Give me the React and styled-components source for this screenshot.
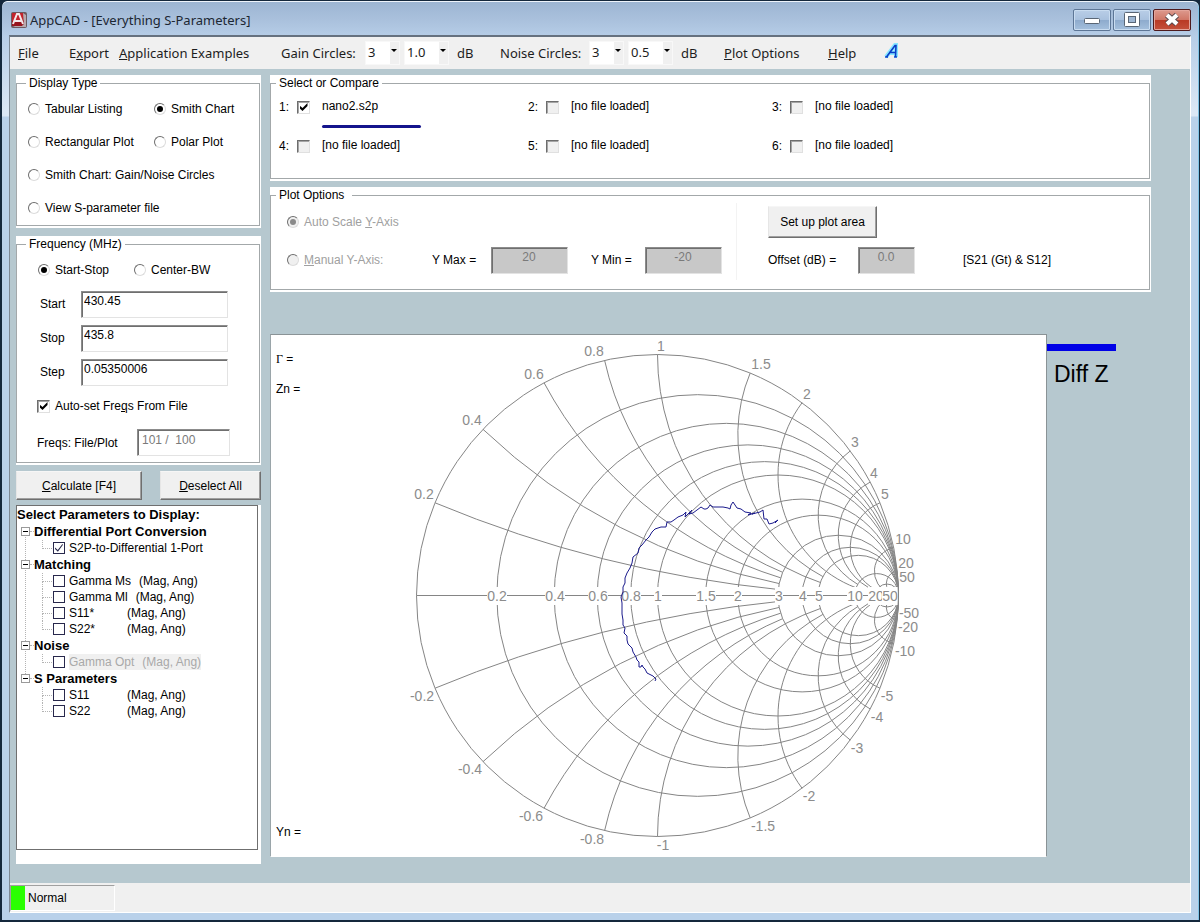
import React from "react";
import styled, { createGlobalStyle, css } from "styled-components";

const GlobalStyle = createGlobalStyle`
  *, *::before, *::after { box-sizing: border-box; }
  body {
    margin: 0;
    background: #14283c;
    font-family: "Liberation Sans", Arial, sans-serif;
    font-size: 12px;
    line-height: 16px;
    color: #000;
  }
  button, input, select { font: inherit; color: inherit; margin: 0; }
  ul { list-style: none; margin: 0; padding: 0; }
`;

/* ---------- window frame ---------- */

const Window = styled.div`
  display: flex;
  flex-direction: column;
  min-height: 100vh;
  border: solid #14283c;
  border-width: 1px 1px 2px 2px;
  border-radius: 7px 7px 0 0;
  padding: 0 8px 7px 7px;
  box-shadow: inset 0 1px 0 #eef4fb, inset -1px 0 0 #7fc3e6;
  background:
    linear-gradient(#9cb5d2, #a9c0dc 18px, #b6cde7 35px, #dbe7f5 110px, #dbe7f5 115px, #b9d1ea 116px);
`;

const TitleBar = styled.header`
  display: flex;
  align-items: center;
  height: 34px;
  padding: 4px 0 0 2px;
  gap: 3px;
`;

const Title = styled.h1`
  flex: 1;
  margin: 0;
  font: 13px/18px "Noto Sans", "Open Sans", sans-serif;
  color: #1c2733;
`;

const CaptionButtons = styled.div`
  display: flex;
  gap: 2px;
`;

const CaptionButton = styled.button`
  display: flex;
  align-items: center;
  justify-content: center;
  width: 38px;
  height: 22px;
  padding: 0;
  border: 1px solid ${(p) => (p.$close ? "#4d1a1d" : "#5d7696")};
  border-radius: 2px;
  box-shadow: inset 0 0 0 1px ${(p) => (p.$close ? "#e4a59b" : "#c9dcf0")};
  background: ${(p) =>
    p.$close
      ? "linear-gradient(#dd9a8e, #d07767 48%, #b93a25 52%, #c4513c)"
      : "linear-gradient(#b9cee7, #a9c1de 48%, #8eabcd 52%, #a5c0dd)"};
`;

const Client = styled.div`
  flex: 1;
  display: flex;
  flex-direction: column;
  border: solid;
  border-width: 2px 1px 1px 1px;
  border-color: #66717f #fff #fff #7d8894;
  background: #b6c8cf;
`;

/* ---------- menu bar ---------- */

const MenuBar = styled.nav`
  display: flex;
  align-items: center;
  height: 32px;
  padding: 0 8px;
  background: #f0f0f0;
  font: 13px/18px "Noto Sans", "Open Sans", sans-serif;
  color: #1d1d1d;
`;

const MenuSlot = styled.div`
  flex: 0 0 ${(p) => p.$w}px;
  white-space: nowrap;
`;

const MenuButton = styled.button`
  padding: 0;
  border: 0;
  background: none;
`;

const SelectBox = styled.div`
  position: relative;
  width: ${(p) => p.$w}px;
  height: 24px;
  border: 1px solid #f8f8f8;
  background: linear-gradient(to left, #f0f0f0 9px, #fff 9px);
  &::after {
    content: "";
    position: absolute;
    right: 2px;
    top: 7px;
    border: 3px solid transparent;
    border-top-color: #000;
    border-bottom: 0;
    pointer-events: none;
  }
`;

const Select = styled.select`
  appearance: none;
  display: block;
  width: 100%;
  height: 20px;
  padding: 0 0 0 2px;
  border: 0;
  background: none;
  line-height: 20px;
`;

/* ---------- layout ---------- */

const Workspace = styled.main`
  flex: 1;
  display: flex;
  gap: 9px;
  padding: 6px 0 19px 6px;
`;

const Sidebar = styled.aside`
  flex: 0 0 245px;
  display: flex;
  flex-direction: column;
  gap: 8px;
`;

const Content = styled.section`
  flex: 1;
  min-width: 0;
  display: flex;
  flex-direction: column;
  gap: 6px;
  padding-bottom: 7px;
`;

const GroupBox = styled.div`
  padding: 0 1px 2px 0;
  margin-right: ${(p) => p.$inset || 0}px;
  background: #fff;
`;

const Fieldset = styled.fieldset`
  min-width: 0;
  margin: 0;
  padding: 0;
  border: 1px solid #a3a8aa;
`;

const Legend = styled.legend`
  height: 16px;
  margin-left: ${(p) => p.$x}px;
  padding: 0 ${(p) => p.$end || 3}px 0 3px;
`;

/* ---------- form controls ---------- */

const ChoiceLabel = styled.label`
  display: flex;
  align-items: center;
  gap: 5px;
  white-space: nowrap;
  ${(p) => p.$off && css`color: #a0a0a0;`}
`;

const Radio = styled.input.attrs({ type: "radio" })`
  appearance: none;
  display: grid;
  place-items: center;
  flex: none;
  width: 12px;
  height: 12px;
  border: 1px solid;
  border-color: #6d6d6d #dcdcdc #dcdcdc #6d6d6d;
  border-radius: 50%;
  background: #fff;
  &:checked::before {
    content: "";
    width: 6px;
    height: 6px;
    border-radius: 50%;
    background: #000;
  }
  &:disabled { background: #f0f0f0; }
  &:disabled::before { background: #8a8a8a; }
`;

const Check = styled.input.attrs({ type: "checkbox" })`
  appearance: none;
  display: grid;
  place-items: center;
  flex: none;
  width: 13px;
  height: 13px;
  border: 1px solid;
  border-color: #6d6d6d #e0e0e0 #e0e0e0 #6d6d6d;
  box-shadow: inset 1px 1px 0 #a5a5a5;
  background: ${(p) => (p.$gray ? "#f0f0f0" : "#fff")};
  &:checked::before {
    content: "";
    width: 8px;
    height: 8px;
    background: #000;
    clip-path: polygon(0 30%, 38% 62%, 100% 0, 100% 36%, 38% 100%, 0 66%);
  }
`;

const TextField = styled.input.attrs({ type: "text" })`
  width: ${(p) => p.$w}px;
  height: 27px;
  padding: 1px 3px 7px ${(p) => p.$pad || 2}px;
  border: 1px solid;
  border-color: #8c8c8c #e3e3e3 #e3e3e3 #8c8c8c;
  border-radius: 0;
  box-shadow: inset 1px 1px 0 #6f6f6f;
  background: ${(p) => (p.$filled ? "#c8c8c8" : "#fff")};
  text-align: ${(p) => (p.$filled ? "center" : "left")};
  ${(p) => p.$dim && css`color: #7a7a7a;`}
`;

const PushButton = styled.button`
  height: ${(p) => p.$h || 29}px;
  width: ${(p) => p.$w}px;
  padding: 0;
  border: 1px solid;
  border-color: #f6f6f6 #6f6f6f #6f6f6f #e6e6e6;
  border-radius: 0;
  box-shadow: inset -1px -1px 0 #a0a0a0;
  background: #f0f0f0;
`;

const RadioGrid = styled.div`
  display: grid;
  grid-template-columns: 126px 1fr;
  grid-auto-rows: 33px;
  padding: 1px 0 1px 11px;
`;

const FullRow = styled.div`
  display: flex;
  grid-column: 1 / -1;
`;

const FieldRow = styled.div`
  display: flex;
  align-items: center;
  height: ${(p) => p.$h || 34}px;
  padding-left: ${(p) => p.$x}px;
`;

const FieldLabel = styled.label`
  flex: 0 0 ${(p) => p.$w}px;
  white-space: nowrap;
`;

const ButtonRow = styled.div`
  display: flex;
  justify-content: space-between;
  margin: -2px 0;
`;

/* ---------- file slots ---------- */

const FileGrid = styled.div`
  display: grid;
  grid-template-columns: 249px 244px 1fr;
  grid-auto-rows: 39px;
  height: 87px;
  padding-left: 8px;
`;

const FileCell = styled.label`
  display: grid;
  grid-template-columns: 18px 13px 1fr;
  grid-template-rows: 32px 3px;
  row-gap: 2px;
  align-items: center;
`;

const FileName = styled.span`
  padding: 0 0 3px 12px;
`;

const TraceMark = styled.span`
  grid-column: 3;
  width: 99px;
  height: 3px;
  margin-left: 12px;
  border-radius: 2px;
  background: #14148c;
`;

/* ---------- plot options ---------- */

const PlotGrid = styled.div`
  display: flex;
  height: 86px;
  padding-bottom: 9px;
`;

const PlotColumn = styled.div`
  flex: 0 0 ${(p) => p.$w || "auto"};
  display: grid;
  grid-auto-rows: 38px;
  padding-left: ${(p) => p.$x}px;
  ${(p) => p.$rule && css`border-right: 1px solid #f3f3f3;`}
`;

const PlotRow = styled.div`
  display: flex;
  align-items: center;
  white-space: nowrap;
`;

const ChoiceSlot = styled.div`
  flex: 0 0 ${(p) => p.$w}px;
`;

const PlotNote = styled.span`
  margin-left: 48px;
`;

/* ---------- chart ---------- */

const ChartRow = styled.div`
  flex: 1;
  display: flex;
  margin-top: 36px;
`;

const ChartPanel = styled.figure`
  flex: 1;
  min-width: 0;
  display: flex;
  margin: 0;
  border: 1px solid;
  border-color: #8a9396 #8a9396 #fff #9aa5a9;
  background: #fff;
`;

const ChartSvg = styled.svg`
  flex: 1;
  display: block;
  width: 100%;
  height: 521px;
`;

const ChartLegend = styled.div`
  flex: 0 0 143px;
  padding-top: 10px;
`;

const LegendBar = styled.div`
  width: 69px;
  height: 7px;
  background: #0000e6;
`;

const LegendText = styled.p`
  margin: 9px 0 0 7px;
  font-size: 23px;
  line-height: 28px;
`;

/* ---------- parameter tree ---------- */

const TreePane = styled.div`
  flex: 1;
  display: flex;
  padding: 0 3px 14px 0;
  margin-top: -1px;
  background: #fff;
`;

const TreeBox = styled.div`
  flex: 1;
  border: 1px solid #6f6f6f;
`;

const TreeTitle = styled.h2`
  height: 17px;
  margin: 0;
  font-size: 13px;
  line-height: 17px;
`;

const TreeGroup = styled.li`
  position: relative;
  &:not(:last-child)::before {
    content: "";
    position: absolute;
    left: 8px;
    top: 8px;
    bottom: -8px;
    border-left: 1px dotted #b4b4b4;
  }
`;

const TreeHead = styled.div`
  display: flex;
  align-items: center;
  height: 17px;
  padding-left: 4px;
  font-size: 13px;
  font-weight: bold;
`;

const Toggle = styled.button`
  position: relative;
  width: 9px;
  height: 9px;
  padding: 0;
  border: 1px solid #9a9a9a;
  background: #fff;
  &::before {
    content: "";
    position: absolute;
    left: 1px;
    top: 3px;
    width: 5px;
    height: 1px;
    background: #000;
  }
`;

const Dash = styled.span`
  width: 4px;
  border-top: 1px dotted #b4b4b4;
`;

const TreeLeaf = styled.li`
  position: relative;
  height: 16px;
  padding-left: 36px;
  &::before {
    content: "";
    position: absolute;
    left: 25px;
    top: 0;
    width: 10px;
    height: 9px;
    border: dotted #b4b4b4;
    border-width: 0 0 1px 1px;
  }
  &:not(:last-child)::after {
    content: "";
    position: absolute;
    left: 25px;
    top: 8px;
    height: 8px;
    border-left: 1px dotted #b4b4b4;
  }
`;

const LeafLabel = styled.label`
  display: flex;
  align-items: center;
  white-space: nowrap;
  ${(p) => p.$off && css`color: #a9a9a9;`}
`;

const LeafCheck = styled.input.attrs({ type: "checkbox" })`
  appearance: none;
  display: grid;
  place-items: center;
  width: 12px;
  height: 12px;
  margin-right: 4px;
  border: 1px solid #28284c;
  background: #fff;
  &:checked::before {
    content: "";
    width: 8px;
    height: 8px;
    background: #28284c;
    clip-path: polygon(0 45%, 35% 76%, 92% 0, 100% 10%, 36% 98%, 0 64%);
  }
`;

const LeafText = styled.span`
  display: flex;
  ${(p) => p.$off && css`background: #f0f0f0;`}
`;

const LeafName = styled.span`
  ${(p) => p.$tagged && css`min-width: 58px; padding-right: 8px;`}
`;

/* ---------- status bar ---------- */

const StatusBar = styled.footer`
  display: flex;
  height: 29px;
  padding: 2px 0 1px;
  background: #f0f0f0;
`;

const StatusCell = styled.div`
  display: flex;
  align-items: center;
  width: 105px;
  border: 1px solid;
  border-color: #a0a0a0 #fff #fff #a0a0a0;
`;

const StatusLamp = styled.span`
  align-self: stretch;
  width: 14px;
  margin-right: 3px;
  background: #2bff00;
`;

/* ---------- data ---------- */

const files = [
  { name: "nano2.s2p", on: true },
  { name: "[no file loaded]" },
  { name: "[no file loaded]" },
  { name: "[no file loaded]" },
  { name: "[no file loaded]" },
  { name: "[no file loaded]" },
];

const tree = [
  {
    title: "Differential Port Conversion",
    items: [{ name: "S2P-to-Differential 1-Port", on: true }],
  },
  {
    title: "Matching",
    items: [
      { name: "Gamma Ms", tag: true },
      { name: "Gamma Ml", tag: true },
      { name: "S11*", tag: true },
      { name: "S22*", tag: true },
    ],
  },
  { title: "Noise", items: [{ name: "Gamma Opt", tag: true, off: true }] },
  {
    title: "S Parameters",
    items: [
      { name: "S11", tag: true },
      { name: "S22", tag: true },
    ],
  },
];

/* ---------- Smith chart ---------- */

const R = 241;
const resistances = [0.2, 0.4, 0.6, 0.8, 1, 1.5, 2, 3, 4, 5, 10, 20, 50];

// Each reactance arc runs from the rim to the resistance circle where it stops.
const reactances = [
  { x: 0.2, stop: 3, up: [-234, -102], down: [-236, 100] },
  { x: 0.4, stop: 3, up: [-186, -176], down: [-188, 173] },
  { x: 0.6, stop: 3, up: [-124, -222], down: [-127, 220] },
  { x: 0.8, stop: 3, up: [-64, -245], down: [-66, 243] },
  { x: 1, stop: 5, up: [3, -250], down: [5, 249] },
  { x: 1.5, stop: 5, up: [103, -232], down: [105, 230] },
  { x: 2, stop: 10, up: [149, -202], down: [151, 200] },
  { x: 3, stop: 10, up: [197, -154], down: [199, 152] },
  { x: 4, stop: 20, up: [216, -123], down: [219, 121] },
  { x: 5, stop: 20, up: [227, -102], down: [229, 100] },
  { x: 10, stop: 50, up: [245, -57], down: [247, 55] },
  { x: 20, stop: 50, up: [248, -33], down: [250, 31] },
  { x: 50, stop: 100, up: [249, -19], down: [251, 17] },
];

const trace = [
  [-3, 85], [-2, 83], [-5, 80], [-11, 77], [-13, 73], [-15, 71], [-16, 69], [-17, 71], [-19, 71], [-19, 66],
  [-21, 64], [-22, 61], [-25, 56], [-26, 52], [-30, 48], [-31, 44], [-31, 40], [-34, 37], [-33, 32],
  [-35, 29], [-35, 24], [-36, 18], [-36, 12], [-36, 7], [-37, 1], [-35, -4], [-35, -9], [-33, -13],
  [-33, -18], [-31, -23], [-28, -28], [-26, -33], [-25, -39], [-20, -43], [-19, -48], [-16, -51],
  [-12, -56], [-9, -59], [-6, -64], [-3, -67], [3, -69], [8, -69], [9, -74], [13, -74], [16, -76],
  [20, -79], [25, -81], [28, -84], [27, -79], [30, -82], [34, -86], [31, -82], [35, -83], [39, -86],
  [43, -89], [46, -87], [48, -87], [50, -88], [52, -91], [55, -89], [65, -89], [70, -88], [72, -87],
  [73, -91], [75, -94], [79, -88], [83, -87], [87, -84], [93, -83], [90, -81], [97, -83], [94, -82], [102, -84],
  [105, -86], [106, -77], [109, -77], [111, -72], [115, -73], [120, -76], [117, -73],
];

const gamma = (r, x) => {
  const d = (r + 1) * (r + 1) + x * x;
  return [(R * (r * r - 1 + x * x)) / d, (R * 2 * x) / d];
};

const arcPath = (x, stop, side) => {
  const [ax, ay] = gamma(0, x);
  const [bx, by] = gamma(stop, x);
  const rad = R / x;
  return `M${ax} ${side * ay}A${rad} ${rad} 0 0 ${side < 0 ? 0 : 1} ${bx} ${side * by}`;
};

const labelWidth = (t) => t.replace(".", "").length * 8 + (t.includes(".") ? 4 : 0);

function SmithChart() {
  return (
    <ChartSvg viewBox="-387 -261 775 521" role="img" aria-label="Smith chart">
      <g fill="none" stroke="#858585" strokeWidth="1" transform="translate(-0.5 -0.5)">
        {resistances.map((r) => (
          <circle key={r} cx={(R * r) / (r + 1)} cy="0" r={R / (r + 1)} />
        ))}
        {reactances.map(({ x, stop }) => (
          <path key={x} d={arcPath(x, stop, -1) + arcPath(x, stop, 1)} />
        ))}
        <path d={`M${-R} 0H${R}`} />
      </g>
      <g fontSize="14" fill="#8c8c8c" textAnchor="middle">
        {resistances.map((r) => {
          const cx = Math.round((R * (r - 1)) / (r + 1));
          const w = labelWidth(String(r));
          return (
            <g key={r}>
              <rect x={cx - w / 2} y="-9" width={w} height="18" fill="#fff" />
              <text x={cx} y="5">{r}</text>
            </g>
          );
        })}
        {reactances.map(({ x, up, down }) => (
          <g key={x}>
            <text x={up[0]} y={up[1] + 5}>{x}</text>
            <text x={down[0]} y={down[1] + 5}>{-x}</text>
          </g>
        ))}
      </g>
      <circle r={R} fill="none" stroke="#858585" transform="translate(-0.5 -0.5)" />
      <polyline points={trace.join(" ")} fill="none" stroke="#1a1a8c" strokeWidth="1" />
      <g fontSize="12">
        <text x="-382" y="-233"><tspan fontFamily="Liberation Serif, serif">Γ</tspan> =</text>
        <text x="-382" y="-203">Zn =</text>
        <text x="-382" y="240">Yn =</text>
      </g>
    </ChartSvg>
  );
}

function AppIcon() {
  return (
    <svg width="16" height="16" viewBox="0 0 16 16" aria-hidden="true">
      <rect width="16" height="16" rx="2" fill="#6c5a60" />
      <path d="M1 1H12L13 12L11 14H1Z" fill="#c2242d" />
      <path d="M1 9L13 8L13 12L11 14H1Z" fill="#97141d" />
      <path d="M12 1L15 3V15H4L2 14H11L13 12Z" fill="#b9a9ad" />
      <path d="M2 12L6 2H8L12 12M4 9H10" fill="none" stroke="#f4e9ea" strokeWidth="2" />
    </svg>
  );
}

function MiniSelect({ width, value, label }) {
  return (
    <SelectBox $w={width}>
      <Select defaultValue={value} aria-label={label}>
        <option>{value}</option>
      </Select>
    </SelectBox>
  );
}

function SidebarField({ id, label, value }) {
  return (
    <FieldRow $x={23}>
      <FieldLabel $w={41} htmlFor={id}>{label}</FieldLabel>
      <TextField id={id} $w={147} defaultValue={value} />
    </FieldRow>
  );
}

export default function App() {
  return (
    <>
      <GlobalStyle />
      <Window>
        <TitleBar>
          <AppIcon />
          <Title>AppCAD - [Everything S-Parameters]</Title>
          <CaptionButtons>
            <CaptionButton aria-label="Minimize">
              <svg width="18" height="14" viewBox="0 0 18 14">
                <rect x="1.5" y="5.5" width="15" height="5" rx="1" fill="#fff" stroke="#5a6675" />
              </svg>
            </CaptionButton>
            <CaptionButton aria-label="Maximize">
              <svg width="16" height="16" viewBox="0 0 16 16">
                <rect x="0.5" y="0.5" width="15" height="14" rx="1" fill="#fff" stroke="#5a6675" />
                <rect x="4.5" y="4.5" width="7" height="6" fill="#9fb7d3" stroke="#5a6675" />
              </svg>
            </CaptionButton>
            <CaptionButton $close aria-label="Close">
              <svg width="18" height="16" viewBox="0 0 18 16">
                <path d="M4 3L14 12M14 3L4 12" stroke="#5b4a4e" strokeWidth="6" />
                <path d="M4 3L14 12M14 3L4 12" stroke="#fff" strokeWidth="4" />
              </svg>
            </CaptionButton>
          </CaptionButtons>
        </TitleBar>

        <Client>
          <MenuBar>
            <MenuSlot $w={51}><MenuButton><u>F</u>ile</MenuButton></MenuSlot>
            <MenuSlot $w={50}><MenuButton>E<u>x</u>port</MenuButton></MenuSlot>
            <MenuSlot $w={162}><MenuButton><u>A</u>pplication Examples</MenuButton></MenuSlot>
            <MenuSlot $w={84}>Gain Circles:</MenuSlot>
            <MenuSlot $w={39}><MiniSelect width={35} value="3" label="Gain circle count" /></MenuSlot>
            <MenuSlot $w={53}><MiniSelect width={45} value="1.0" label="Gain circle step" /></MenuSlot>
            <MenuSlot $w={43}>dB</MenuSlot>
            <MenuSlot $w={89}>Noise Circles:</MenuSlot>
            <MenuSlot $w={39}><MiniSelect width={35} value="3" label="Noise circle count" /></MenuSlot>
            <MenuSlot $w={53}><MiniSelect width={45} value="0.5" label="Noise circle step" /></MenuSlot>
            <MenuSlot $w={43}>dB</MenuSlot>
            <MenuSlot $w={104}><MenuButton><u>P</u>lot Options</MenuButton></MenuSlot>
            <MenuSlot $w={56}><MenuButton><u>H</u>elp</MenuButton></MenuSlot>
            <MenuButton aria-label="AppCAD home">
              <svg width="16" height="18" viewBox="0 0 16 18" fill="none">
                <path d="M2 15L11 3H12V15M4 11H13" stroke="#86e6ff" strokeWidth="4" />
                <path d="M1 15H4M10 15H13" stroke="#0a4fd0" strokeWidth="1.5" />
                <path d="M2.500 15L11 3.500H12L11.500 15M5 10.500H12" stroke="#0a3cc8" strokeWidth="1.600" />
              </svg>
            </MenuButton>
          </MenuBar>

          <Workspace>
            <Sidebar>
              <GroupBox>
                <Fieldset>
                  <Legend $x={9}>Display Type</Legend>
                  <RadioGrid>
                    <ChoiceLabel><Radio name="display" />Tabular Listing</ChoiceLabel>
                    <ChoiceLabel><Radio name="display" defaultChecked />Smith Chart</ChoiceLabel>
                    <ChoiceLabel><Radio name="display" />Rectangular Plot</ChoiceLabel>
                    <ChoiceLabel><Radio name="display" />Polar Plot</ChoiceLabel>
                    <FullRow><ChoiceLabel><Radio name="display" />Smith Chart: Gain/Noise Circles</ChoiceLabel></FullRow>
                    <FullRow><ChoiceLabel><Radio name="display" />View S-parameter file</ChoiceLabel></FullRow>
                  </RadioGrid>
                </Fieldset>
              </GroupBox>

              <GroupBox>
                <Fieldset>
                  <Legend $x={9}>Frequency (MHz)</Legend>
                  <FieldRow $x={21} $h={35}>
                    <ChoiceSlot $w={96}>
                      <ChoiceLabel><Radio name="span" defaultChecked />Start-Stop</ChoiceLabel>
                    </ChoiceSlot>
                    <ChoiceLabel><Radio name="span" />Center-BW</ChoiceLabel>
                  </FieldRow>
                  <SidebarField id="start" label="Start" value="430.45" />
                  <SidebarField id="stop" label="Stop" value="435.8" />
                  <SidebarField id="step" label="Step" value="0.05350006" />
                  <FieldRow $x={20}>
                    <ChoiceLabel>
                      <Check defaultChecked />
                      <span>Auto-set Fre<u>q</u>s From File</span>
                    </ChoiceLabel>
                  </FieldRow>
                  <FieldRow $x={20} $h={39}>
                    <FieldLabel $w={100} htmlFor="freqs">Freqs: File/Plot</FieldLabel>
                    <TextField id="freqs" $w={93} $pad={4} $dim readOnly value="101 /  100" />
                  </FieldRow>
                </Fieldset>
              </GroupBox>

              <ButtonRow>
                <PushButton $w={126}><u>C</u>alculate [F4]</PushButton>
                <PushButton $w={101}><u>D</u>eselect All</PushButton>
              </ButtonRow>

              <TreePane>
                <TreeBox>
                  <TreeTitle>Select Parameters to Display:</TreeTitle>
                  <ul>
                    {tree.map((group) => (
                      <TreeGroup key={group.title}>
                        <TreeHead>
                          <Toggle aria-label={`Collapse ${group.title}`} />
                          <Dash />
                          {group.title}
                        </TreeHead>
                        <ul>
                          {group.items.map((item) => (
                            <TreeLeaf key={item.name}>
                              <LeafLabel $off={item.off}>
                                <LeafCheck defaultChecked={item.on} disabled={item.off} />
                                <LeafText $off={item.off}>
                                  <LeafName $tagged={item.tag}>{item.name}</LeafName>
                                  {item.tag && <span>(Mag, Ang)</span>}
                                </LeafText>
                              </LeafLabel>
                            </TreeLeaf>
                          ))}
                        </ul>
                      </TreeGroup>
                    ))}
                  </ul>
                </TreeBox>
              </TreePane>
            </Sidebar>

            <Content>
              <GroupBox $inset={39}>
                <Fieldset>
                  <Legend $x={5}>Select or Compare</Legend>
                  <FileGrid>
                    {files.map((file, i) => (
                      <FileCell key={i}>
                        <span>{i + 1}:</span>
                        <Check $gray={!file.on} defaultChecked={file.on} />
                        <FileName>{file.name}</FileName>
                        {file.on && <TraceMark />}
                      </FileCell>
                    ))}
                  </FileGrid>
                </Fieldset>
              </GroupBox>

              <GroupBox $inset={39}>
                <Fieldset>
                  <Legend $x={5} $end={8}>Plot Options</Legend>
                  <PlotGrid>
                    <PlotColumn $w="466px" $x={16} $rule>
                      <PlotRow>
                        <ChoiceLabel $off>
                          <Radio name="yscale" disabled defaultChecked />
                          <span>Auto Scale <u>Y</u>-Axis</span>
                        </ChoiceLabel>
                      </PlotRow>
                      <PlotRow>
                        <ChoiceSlot $w={145}>
                          <ChoiceLabel $off>
                            <Radio name="yscale" disabled />
                            <span><u>M</u>anual Y-Axis:</span>
                          </ChoiceLabel>
                        </ChoiceSlot>
                        <FieldLabel $w={59} htmlFor="ymax">Y Max =</FieldLabel>
                        <ChoiceSlot $w={100}>
                          <TextField id="ymax" $w={77} $filled $dim readOnly value="20" />
                        </ChoiceSlot>
                        <FieldLabel $w={54} htmlFor="ymin">Y Min =</FieldLabel>
                        <TextField id="ymin" $w={77} $filled $dim readOnly value="-20" />
                      </PlotRow>
                    </PlotColumn>
                    <PlotColumn $x={31}>
                      <PlotRow>
                        <PushButton $w={109} $h={32}>Set up plot area</PushButton>
                      </PlotRow>
                      <PlotRow>
                        <FieldLabel $w={90} htmlFor="offset">Offset (dB) =</FieldLabel>
                        <TextField id="offset" $w={57} $filled $dim readOnly value="0.0" />
                        <PlotNote>[S21 (Gt) &amp; S12]</PlotNote>
                      </PlotRow>
                    </PlotColumn>
                  </PlotGrid>
                </Fieldset>
              </GroupBox>

              <ChartRow>
                <ChartPanel>
                  <SmithChart />
                </ChartPanel>
                <ChartLegend>
                  <LegendBar />
                  <LegendText>Diff Z</LegendText>
                </ChartLegend>
              </ChartRow>
            </Content>
          </Workspace>

          <StatusBar>
            <StatusCell>
              <StatusLamp />
              Normal
            </StatusCell>
          </StatusBar>
        </Client>
      </Window>
    </>
  );
}
